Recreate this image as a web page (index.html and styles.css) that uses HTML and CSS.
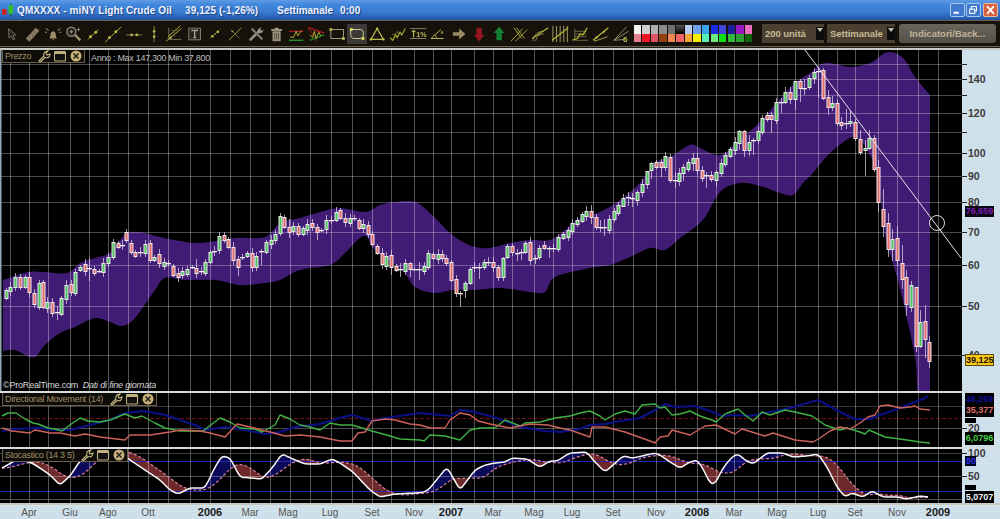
FILE: index.html
```html
<!DOCTYPE html>
<html lang="it">
<head>
<meta charset="utf-8">
<title>ProRealTime</title>
<link rel="stylesheet" href="styles.css">
</head>
<body>
<div class="app">
  <header class="titlebar">
    <svg class="appicon" viewBox="0 0 14 14"><rect x="0" y="6" width="5" height="6" fill="#d02020"/><line x1="9.5" y1="0" x2="9.5" y2="14" stroke="#0a5a10"/><rect x="7" y="2" width="5" height="9" fill="#30c030"/></svg>
    <span class="t-name">QMXXXX - miNY Light Crude Oil</span>
    <span class="t-price">39,125 (-1,26%)</span>
    <span class="t-per">Settimanale</span>
    <span class="t-time">0:00</span>
    <div class="winbtns">
      <span class="winbtn"><svg viewBox="0 0 15 14"><rect x="3" y="9" width="6" height="2.4" fill="#fff"/></svg></span>
      <span class="winbtn"><svg viewBox="0 0 15 14"><rect x="5" y="3" width="6" height="5" fill="none" stroke="#fff" stroke-width="1.2"/><rect x="3" y="6" width="6" height="5" fill="#4a80d0" stroke="#fff" stroke-width="1.2"/></svg></span>
      <span class="winbtn close"><svg viewBox="0 0 15 14"><path d="M3.5 2.5l8 9M11.5 2.5l-8 9" stroke="#fff" stroke-width="2.2"/></svg></span>
    </div>
  </header>

  <nav class="toolbar">
    <div class="tools">
      <svg class="ico" viewBox="0 0 20 20"><path d="M6 4l8 7-3 .5 2 4-2 1-2-4-2.500 2z" fill="#2a2620" stroke="#8f8f88"/></svg>
      <svg class="ico" viewBox="0 0 20 20"><path d="M3 15L14 3l4 3.500L7 18.500z" fill="#a89a80" stroke="#5a4f3c" stroke-width=".6"/><path d="M6 13l2 2M9 10l2 2M12 7l2 2" stroke="#4f4636"/></svg>
      <svg class="ico" viewBox="0 0 20 20"><path d="M6 15c1-2 1-4 1.500-6 .5-2.500 4.500-2.500 5 0 .5 2 .5 4 1.500 6z" fill="#c0ac84"/><rect x="8.500" y="15" width="3" height="2" fill="#6a5a3a"/><path d="M2 4l3 2M18 4l-3 2M1 8h2M19 8h-2" stroke="#d8d0b0"/></svg>
      <svg class="ico" viewBox="0 0 20 20"><circle cx="8" cy="7.500" r="5" fill="#28261f" stroke="#9a9a90" stroke-width="1.600"/><path d="M12 11l6 6" stroke="#c0b08a" stroke-width="2.600"/><path d="M6 7.500h4M8 5.500v4" stroke="#c0c0a8"/><path d="M14 5h4M16 3v4" stroke="#c0c0a8" stroke-width=".8"/></svg>
      <svg class="ico" viewBox="0 0 20 20"><path d="M4 16L16 5" stroke="#c8c840"/><circle cx="7" cy="13" r="1.600" fill="#e8e860"/><circle cx="13" cy="8" r="1.600" fill="#e8e860"/></svg>
      <svg class="ico" viewBox="0 0 20 20"><path d="M1 19L19 2" stroke="#d8d840"/><circle cx="6" cy="14" r="1.600" fill="#e8e860"/><circle cx="13" cy="7.500" r="1.600" fill="#e8e860"/></svg>
      <svg class="ico" viewBox="0 0 20 20"><path d="M1 11h18" stroke="#a09a50"/><circle cx="7" cy="11" r="1.500" fill="#d8d860"/><circle cx="13" cy="11" r="1.500" fill="#d8d860"/></svg>
      <svg class="ico" viewBox="0 0 20 20"><path d="M10 1v18" stroke="#b0b050"/><circle cx="10" cy="7" r="1.500" fill="#d8d860"/><circle cx="10" cy="13" r="1.500" fill="#d8d860"/></svg>
      <svg class="ico" viewBox="0 0 20 20"><path d="M4 3v13h14" fill="none" stroke="#8f8a70"/><path d="M1 18L18 4M3 13L17 1" stroke="#e0d840"/><path d="M6 6h8M6 9h8M6 12h6" stroke="#7f7a60" stroke-width=".7"/><circle cx="6" cy="14" r="1.300" fill="#e8e860"/></svg>
      <svg class="ico" viewBox="0 0 20 20"><rect x="3" y="3.500" width="13" height="13" fill="#2a2820" stroke="#a0a090"/><path d="M6.500 7V6h6v1M9.500 6v8M8 14h3" fill="none" stroke="#d0d0c0" stroke-width="1.400"/></svg>
      <svg class="ico" viewBox="0 0 20 20"><path d="M4 15L16 5" stroke="#a8a830" stroke-dasharray="1.500 1.500"/><circle cx="7" cy="12.500" r="1.500" fill="#e8e860"/><circle cx="13" cy="7.500" r="1.500" fill="#e8e860"/><circle cx="10" cy="10" r=".9" fill="#e8e860"/></svg>
      <svg class="ico" viewBox="0 0 20 20"><path d="M3 17L17 3" stroke="#d0c840"/><path d="M5 5l10 10" stroke="#8f8a60"/><circle cx="7" cy="7" r="1" fill="#c8c060"/></svg>
      <svg class="ico" viewBox="0 0 20 20"><path d="M3 17L13 7" stroke="#b8b0a0" stroke-width="2.800"/><path d="M12 8c-1-3 1-5 4-5l-1.500 2 1.500 1.500 2-1.500c0 3-2 5-5 4z" fill="#b8b0a0"/><path d="M5 4l12 12" stroke="#9a927e" stroke-width="2.400"/></svg>
      <svg class="ico" viewBox="0 0 20 20"><rect x="6" y="7" width="9" height="11" fill="#b8ad98"/><rect x="4.500" y="4.500" width="12" height="2" fill="#c8bea8"/><rect x="8.500" y="3" width="4" height="1.500" fill="#c8bea8"/><path d="M8.500 9v7M10.500 9v7M12.500 9v7" stroke="#5f5848"/></svg>
      <svg class="ico" viewBox="0 0 20 20"><path d="M2 7h16" stroke="#c02020" stroke-width="1.400"/><path d="M2 17h16" stroke="#20b030" stroke-width="1.600"/><path d="M3 13l4 1 3-7 2 5 4-6" fill="none" stroke="#e0e040"/></svg>
      <svg class="ico" viewBox="0 0 20 20"><path d="M1 3l18 6" stroke="#d02020" stroke-width="1.400"/><path d="M1 3l10 15" stroke="#c02020"/><path d="M3 17L19 11" stroke="#20a030" stroke-width="1.600"/><path d="M3 11l3 3 2-7 2 8 3-7 2 4" fill="none" stroke="#e0e040"/></svg>
      <svg class="ico" viewBox="0 0 20 20"><rect x="3" y="5" width="14" height="10" fill="none" stroke="#c8c8a0"/><rect x="1.500" y="3.500" width="3" height="3" fill="#e8e060"/><rect x="15.500" y="13.500" width="3" height="3" fill="#e8e060"/></svg>
      <svg class="ico sel" viewBox="0 0 20 20"><path d="M4 5h10c4 0 4 10 0 10H6C2 15 2 5 4 5z" fill="none" stroke="#d8d8a0"/><rect x="2" y="3.500" width="3" height="3" fill="#e8e060"/><rect x="15" y="13.500" width="3" height="3" fill="#e8e060"/></svg>
      <svg class="ico" viewBox="0 0 20 20"><path d="M10 4L3 16h14z" fill="none" stroke="#e0e060" stroke-width="1.300"/><circle cx="10" cy="4" r="1.300" fill="#e8e860"/><circle cx="3" cy="16" r="1.300" fill="#e8e860"/><circle cx="17" cy="16" r="1.300" fill="#e8e860"/></svg>
      <svg class="ico" viewBox="0 0 20 20"><path d="M1 14l3 3 3-6 2 3 3-6 2 3 4-7" fill="none" stroke="#d8d840" stroke-width="1.200"/><path d="M3 10l3 1 3-4 2 3" fill="none" stroke="#a8a840" stroke-width=".8"/></svg>
      <svg class="ico" viewBox="0 0 20 20"><path d="M1 4h18M1 15h18" stroke="#a8a880"/><path d="M5 14V6M3 8l2-2 2 2" fill="none" stroke="#e0e060" stroke-width="1.200"/><text class="ico-t" x="8" y="13">1%</text></svg>
      <svg class="ico" viewBox="0 0 20 20"><path d="M2 15h14M2 15L13 5" fill="none" stroke="#d8d860" stroke-width="1.100"/><path d="M8 15c0-2-.5-3-1.500-4" fill="none" stroke="#d8d860"/><text class="ico-t" x="13" y="13">º</text></svg>
      <svg class="ico" viewBox="0 0 20 20"><path d="M3 8h7V4l7 6-7 6v-4H3z" fill="#b8a878"/></svg>
      <svg class="ico" viewBox="0 0 20 20"><path d="M7 3h6v8h3l-6 7-6-7h3z" fill="#b01828"/></svg>
      <svg class="ico" viewBox="0 0 20 20"><path d="M7 17h6V9h3l-6-7-6 7h3z" fill="#129a3a"/></svg>
      <svg class="ico" viewBox="0 0 20 20"><path d="M1 18L14 4M6 18L19 5M4 3l9 12M7 3l9 12" stroke="#d8d840"/></svg>
      <svg class="ico" viewBox="0 0 20 20"><path d="M2 18c1-8 6-11 12-11M5 18c1-6 4-8 9-8" fill="none" stroke="#c0b880"/><path d="M1 15L19 3" stroke="#e0e040" stroke-width="1.200"/></svg>
      <svg class="ico" viewBox="0 0 20 20"><path d="M2 1v18M6 1v18M10 1v18M14 1v18M18 1v18" stroke="#c8c880"/><path d="M1 17L19 3" stroke="#e0e040" stroke-width="1.200"/></svg>
      <svg class="ico" viewBox="0 0 20 20"><path d="M4 4v13h15M4 7h13M4 10h13M4 13h13" fill="none" stroke="#a8a468" stroke-width=".8"/><path d="M1 17l6-2 3-5 3 1 5-8" fill="none" stroke="#e0e040" stroke-width="1.300"/></svg>
      <svg class="ico" viewBox="0 0 20 20"><path d="M1 17L18 3" stroke="#e0e040" stroke-width="1.300"/><path d="M2 18l7-2 8-3" fill="none" stroke="#d0d060"/><circle cx="5" cy="14" r="1.200" fill="#e8e860"/><circle cx="13" cy="7.500" r="1.200" fill="#e8e860"/></svg>
      <svg class="ico" viewBox="0 0 20 20"><path d="M2 17L16 2M2 17L18 7M2 17l12-1" stroke="#b8b480"/><text class="ico-six" x="12" y="19">6</text></svg>
    </div>
    <div class="palette">
      <i class="c1"></i><i class="c2"></i><i class="c3"></i><i class="c4"></i><i class="c5"></i><i class="c6"></i><i class="c7"></i><i class="c8"></i><i class="c9"></i><i class="c10"></i><i class="c11"></i><i class="c12"></i><i class="c13"></i><i class="c14"></i>
      <i class="d1"></i><i class="d2"></i><i class="d3"></i><i class="d4"></i><i class="d5"></i><i class="d6"></i><i class="d7"></i><i class="d8"></i><i class="d9"></i><i class="d10"></i><i class="d11"></i><i class="d12"></i><i class="d13"></i><i class="d14"></i>
    </div>
    <div class="combo units"><span>200 unità</span><b class="drop"></b></div>
    <div class="combo period"><span>Settimanale</span><b class="drop"></b></div>
    <div class="indic">Indicatori/Back...</div>
  </nav>
  <div class="strip"></div>

  <section class="panel main-panel">
    <div class="plot">
      <svg id="main" class="chart" width="962" height="341" viewBox="0 50 962 341"></svg>
      <div class="phead"><span class="pname">Prezzo</span>
        <svg class="hico" viewBox="0 0 14 12"><use href="#wrench"/></svg><svg class="hico" viewBox="0 0 14 12"><use href="#winic"/></svg><svg class="hico" viewBox="0 0 14 12"><use href="#closeic"/></svg></div>
      <span class="anno">Anno : Max 147,300 Min 37,800</span>
      <span class="copy">©ProRealTime.com&nbsp; <em>Dati di fine giornata</em></span>
    </div>
    <div class="axis">
      <span class="tick" style="top:7px"></span>
      <span class="tick lab" style="top:22px">140</span>
      <span class="tick" style="top:38px"></span>
      <span class="tick lab" style="top:56px">120</span>
      <span class="tick" style="top:75px"></span>
      <span class="tick lab" style="top:96px">100</span>
      <span class="tick lab" style="top:119px">90</span>
      <span class="tick lab" style="top:145px">80</span>
      <span class="tick lab" style="top:175px">70</span>
      <span class="tick lab" style="top:208px">60</span>
      <span class="tick lab" style="top:249px">50</span>
      <span class="tick lab" style="top:298px">40</span>
      <span class="tag tag-purple" style="top:156px">76,659</span>
      <span class="tag tag-gold" style="top:304px">39,125</span>
    </div>
  </section>

  <section class="panel sub-panel">
    <div class="plot">
      <svg id="dm" class="chart" width="962" height="54" viewBox="0 393 962 54"></svg>
      <div class="phead"><span class="pname">Directional Movement (14)</span>
        <svg class="hico" viewBox="0 0 14 12"><use href="#wrench"/></svg><svg class="hico" viewBox="0 0 14 12"><use href="#winic"/></svg><svg class="hico" viewBox="0 0 14 12"><use href="#closeic"/></svg></div>
    </div>
    <div class="axis">
      <span class="tag tag-navy" style="top:0">46,269</span>
      <span class="tag tag-red" style="top:11px">35,377</span>
      <span class="tag tag-stub" style="top:25px"></span>
      <span class="tick lab" style="top:28px">20</span>
      <span class="tag tag-green" style="top:39px">6,0796</span>
    </div>
  </section>

  <section class="panel sub-panel">
    <div class="plot">
      <svg id="st" class="chart" width="962" height="54" viewBox="0 449 962 54"></svg>
      <div class="phead"><span class="pname">Stocastico (14 3 5)</span>
        <svg class="hico" viewBox="0 0 14 12"><use href="#wrench"/></svg><svg class="hico" viewBox="0 0 14 12"><use href="#winic"/></svg><svg class="hico" viewBox="0 0 14 12"><use href="#closeic"/></svg></div>
    </div>
    <div class="axis">
      <span class="tick lab tight" style="top:0">100</span>
      <span class="tag tag-blue" style="top:7px">80</span>
      <span class="tick lab" style="top:20px">50</span>
      <span class="tag tag-stub" style="top:36px"></span>
      <span class="tag tag-white" style="top:42px">5,0707</span>
    </div>
  </section>

  <footer class="xaxis">
    <span style="left:29px">Apr</span><span style="left:70px">Giu</span><span style="left:108px">Ago</span><span style="left:148px">Ott</span>
    <span class="yr" style="left:210px">2006</span><span style="left:250px">Mar</span><span style="left:288px">Mag</span><span style="left:330px">Lug</span><span style="left:372px">Set</span><span style="left:414px">Nov</span>
    <span class="yr" style="left:451px">2007</span><span style="left:493px">Mar</span><span style="left:534px">Mag</span><span style="left:572px">Lug</span><span style="left:613px">Set</span><span style="left:656px">Nov</span>
    <span class="yr" style="left:697px">2008</span><span style="left:734px">Mar</span><span style="left:777px">Mag</span><span style="left:818px">Lug</span><span style="left:855px">Set</span><span style="left:897px">Nov</span>
    <span class="yr" style="left:938px">2009</span>
  </footer>
</div>

<svg class="defs" width="0" height="0">
  <defs>
    <g id="wrench"><path d="M2 11L7 6c-1-3 1-5 4-5L9 3l1 2 3-1c0 3-2 4.500-5 3.500L3.500 12z" fill="none" stroke="#c8b888" stroke-width="1.100"/></g>
    <g id="winic"><rect x="1.500" y="1.500" width="11" height="9.500" rx="1" fill="#111" stroke="#c0b080" stroke-width="1.100"/><rect x="1.500" y="1.500" width="11" height="2.500" fill="#c0b080"/></g>
    <g id="closeic"><circle cx="7" cy="6" r="5.500" fill="#c8b078"/><path d="M4.500 3.500l5 5M9.500 3.500l-5 5" stroke="#222" stroke-width="1.500"/></g>
  </defs>
</svg>
<script src="script.js"></script>
</body>
</html>
```
FILE: styles.css
```css
* { box-sizing: border-box; }
html, body { margin: 0; padding: 0; background: #000; }
body { width: 1000px; height: 519px; overflow: hidden; font-family: "Liberation Sans", Arial, sans-serif; }
.app { width: 1000px; height: 519px; display: flex; flex-direction: column; background: #cfe0ea; }
.defs { position: absolute; }

.titlebar {
  height: 20px; flex: none; display: flex; align-items: center; padding-left: 2px;
  background: linear-gradient(#5f9be4 0, #3f86dd 25%, #3a7bd0 60%, #1f55a8 100%);
  color: #eef3ff; font: bold 10px "Liberation Sans", sans-serif;
  letter-spacing: .1px; text-shadow: 1px 1px 1px #1b3f80;
}
.appicon { width: 13px; height: 14px; flex: none; margin-right: 2px; }
.t-name { width: 168px; flex: none; white-space: nowrap; }
.t-price { width: 92px; flex: none; white-space: nowrap; }
.t-per { width: 63px; flex: none; white-space: nowrap; letter-spacing: 0; }
.t-time { flex: none; }
.winbtns { margin-left: auto; display: flex; gap: 1px; padding-right: 2px; }
.winbtn { width: 15px; height: 14px; border: 1px solid #a9c6ee; border-radius: 2px; background: #3f78cc; display: block; }
.winbtn svg { width: 100%; height: 100%; display: block; }
.winbtn.close { background: #d8603c; border-color: #e8b8a0; margin-left: 1px; }

.toolbar {
  height: 27px; flex: none; display: flex; align-items: center; padding: 0 2px;
  background: #16110a; border-top: 1px solid #6f5f46; border-bottom: 1px solid #6f5f46;
}
.tools { display: flex; width: 631px; flex: none; }
.ico { width: 20.3px; height: 20px; flex: none; opacity: .82; padding: 1px; }
.ico.sel { background: #3c3a36; opacity: 1; }
.ico-t { font: bold 8px "Liberation Sans", sans-serif; fill: #d8d860; }
.ico-six { font: bold 9px "Liberation Sans", sans-serif; fill: #e0e060; }

.palette { display: grid; grid-template-columns: repeat(14, 8.55px); grid-auto-rows: 8.5px; width: 120px; flex: none; }
.palette i { display: block; margin: 0 .6px; }
.c1{background:#f4f4f4}.c2{background:#cfcfcf}.c3{background:#b0b0b0}.c4{background:#8c8c8c}.c5{background:#707070}.c6{background:linear-gradient(#555,#000)}.c7{background:#b8ccf2}.c8{background:#70a0ee}.c9{background:#38a4ec}.c10{background:#1c2ce0}.c11{background:#4444d8}.c12{background:#1c1c9c}.c13{background:#9a18c4}.c14{background:#f06cc4}
.d1{background:#e88090}.d2{background:#ee1420}.d3{background:#dc5464}.d4{background:#92400e}.d5{background:#f08850}.d6{background:#f06464}.d7{background:#f0a634}.d8{background:#f8f000}.d9{background:#58f0b4}.d10{background:#70e880}.d11{background:#10e010}.d12{background:#30b838}.d13{background:#2ca034}.d14{background:#0c640c}

.combo {
  height: 19px; flex: none; display: flex; align-items: center; padding-left: 3px;
  background: #4a3f30; color: #c8bc98; font: bold 9.5px "Liberation Sans", sans-serif; letter-spacing: -.05px; white-space: nowrap;
}
.combo.units { width: 62px; margin-left: 9px; }
.combo.period { width: 68px; margin-left: 3px; }
.drop { margin-left: auto; width: 8px; height: 13px; background: #0c0c0c; position: relative; }
.drop::after { content: ""; position: absolute; left: 1px; top: 1px; border: 3px solid transparent; border-top: 4px solid #c8c0a8; }
.indic {
  width: 97px; height: 19px; margin-left: 4px; flex: none; text-align: center; border-radius: 3px;
  background: linear-gradient(#6a655a, #55504a); color: #c0b496; font: bold 9.5px/19px "Liberation Sans", sans-serif;
}
.strip { height: 3px; flex: none; background: linear-gradient(#1c1c1a 0 1px, #c8c8c4 1px); }

.panel { display: flex; flex: none; }
.main-panel { height: 341px; }
.sub-panel { height: 56px; border-top: 2px solid #d8dcdc; }
.plot { width: 962px; flex: none; position: relative; background: #000; }
.chart { display: block; filter: blur(.3px); }
.axis { flex: 1; position: relative; overflow: hidden; }
.axis, .xaxis {
  background: repeating-linear-gradient(0deg, #cbdde8 0 1px, #d3e3ec 1px 2px);
}
.tick { position: absolute; left: 0; width: 5px; height: 1px; background: #222; margin-top: 7px; }
.tick.lab { width: auto; height: 14px; margin-top: 0; background: none; padding-left: 6px; font: bold 10.5px/14px "Liberation Sans", sans-serif; color: #3a3a3a; }
.tick.lab::before { content: ""; position: absolute; left: 0; top: 7px; width: 5px; height: 1px; background: #222; }
.tick.lab.tight { height: 8px; line-height: 8px; }
.tick.lab.tight::before { top: 4px; }
.tag { position: absolute; left: 3px; width: 29px; height: 13px; text-align: center; font: bold 9px/13px "Liberation Sans", sans-serif; background: #000; white-space: nowrap; }
.tag-purple { color: #7a20b0; height: 11px; line-height: 11px; background: #0a0612; }
.tag-gold { background: #f8c814; color: #1a1000; border: 1px solid #5a4a10; height: 12px; line-height: 10px; }
.tag-navy { color: #101090; }
.tag-red { color: #e07070; }
.tag-green { color: #48d048; }
.tag-white { color: #f4f4f4; }
.tag-blue { color: #3030e0; background: #050520; width: 11px; text-align: left; padding-left: 1px; height: 10px; line-height: 10px; }
.tag-stub { width: 11px; height: 5px; }

.phead {
  position: absolute; left: 2px; top: 0; height: 13px; display: flex; align-items: center; gap: 2px;
  background: #0d0c08; border: 1px solid #6a604a; border-top: 0; padding: 0 1px 0 2px;
}
.pname { font: 9px/12px "Liberation Sans", sans-serif; color: #a08e66; white-space: nowrap; margin-right: 4px; letter-spacing: -.3px; }
.hico { width: 14px; height: 12px; flex: none; }
.anno { position: absolute; left: 91px; top: 2px; font: 9px/12px "Liberation Sans", sans-serif; color: #bfbfbf; letter-spacing: -.3px; white-space: nowrap; }
.copy { position: absolute; left: 3px; top: 329px; font: 9px/12px "Liberation Sans", sans-serif; color: #d8d8d8; white-space: nowrap; letter-spacing: -.2px; }
.copy em { font-style: italic; }

.xaxis { flex: 1; position: relative; border-top: 2px solid #c8c8c0; }
.xaxis span { position: absolute; top: 1px; transform: translateX(-50%); font: 10px/13px "Liberation Sans", sans-serif; color: #555; }
.xaxis .yr { font: bold 11px/13px "Liberation Sans", sans-serif; color: #1a1a1a; }
```
FILE: script.js
```js
var NS = "http://www.w3.org/2000/svg";
function el(parent, tag, attrs) {
  var e = document.createElementNS(NS, tag);
  for (var k in attrs) e.setAttribute(k, attrs[k]);
  parent.appendChild(e);
  return e;
}
function pts(a) { return a.map(function (p) { return p[0] + "," + p[1]; }).join(" "); }
/* Catmull-Rom curve through the points, as path segments */
function curve(a) {
  var d = "";
  for (var i = 0; i < a.length - 1; i++) {
    var p0 = a[Math.max(i - 1, 0)], p1 = a[i], p2 = a[i + 1], p3 = a[Math.min(i + 2, a.length - 1)];
    d += " C" + (p1[0] + (p2[0] - p0[0]) / 6).toFixed(1) + " " + (p1[1] + (p2[1] - p0[1]) / 6).toFixed(1) + " " +
      (p2[0] - (p3[0] - p1[0]) / 6).toFixed(1) + " " + (p2[1] - (p3[1] - p1[1]) / 6).toFixed(1) + " " + p2[0] + " " + p2[1];
  }
  return d;
}

var gridX = [10,29,48,70,89,108,128,148,168,190,210,230,250,270,290,310,331,352,372,391,414,433,451,474,493,512,534,553,572,593,613,633,656,675,697,716,734,758,777,795,818,837,855,878,897,918,938];

function vgrid(svg, top, bottom) {
  gridX.forEach(function (x) {
    el(svg, "line", { x1: x + .5, x2: x + .5, y1: top, y2: bottom, stroke: "#fff", "stroke-opacity": .33 });
  });
}
function hline(svg, y, color, extra) {
  var a = { x1: 0, x2: 962, y1: y + .5, y2: y + .5, stroke: color };
  for (var k in extra || {}) a[k] = extra[k];
  el(svg, "line", a);
}

/* ---------- price panel ---------- */
var upper = [[3,280],[28,272],[43,272],[67,273],[80,263],[95,258],[110,253],[120,240],[127,233],[140,232],[160,237],[180,241],[200,243],[235,238],[265,237],[280,223],[300,218],[320,212],[340,208],[365,212],[380,205],[395,202],[415,202],[430,213],[450,233],[465,243],[475,247],[490,248],[510,243],[530,240],[550,240],[565,230],[580,218],[600,212],[620,200],[640,183],[655,163],[670,157],[690,145],[700,148],[720,155],[740,140],[760,122],[775,105],[795,83],[810,73],[825,63],[850,67],[870,63],[885,53],[895,53],[905,60],[915,77],[930,95]];
var lower = [[3,351],[15,350],[25,355],[35,357],[45,345],[60,333],[75,327],[95,318],[110,322],[122,326],[135,318],[155,290],[165,278],[185,280],[215,280],[240,285],[265,283],[280,280],[300,270],[330,265],[345,253],[360,238],[367,237],[375,250],[402,270],[415,287],[435,293],[452,290],[475,290],[500,288],[530,292],[545,292],[555,277],[590,268],[610,265],[630,257],[650,248],[665,250],[680,238],[703,220],[720,192],[740,183],[760,186],[780,193],[793,195],[803,183],[813,173],[830,153],[850,138],[860,140],[867,150],[877,173],[885,235],[893,263],[902,297],[915,357],[917,391]];

var C = [
[6,290,298,"g"],[10,287,291,"g"],[15,277,287,"g"],[20,277,287,"r"],[25,277,287,"g"],[29,277,292,"r"],[34,293,304,"r"],[39,283,307,"g"],[43,282,307,"r"],[47,302,308,"g"],[52,302,313,"r"],[57,312,312,"d",306,320],[61,298,314,"g"],[66,285,299,"g"],[71,284,292,"r"],[75,272,293,"g"],[80,267,270,"g"],[85,264,271,"r"],[89,268,268,"d",258,281],[94,269,273,"r"],[99,271,271,"d"],[103,263,272,"g"],[108,257,263,"g"],[113,242,257,"g"],[118,243,247,"r"],[122,245,245,"d"],[126,232,240,"r",229,243],[131,243,252,"r"],[135,252,256,"r"],[140,252,252,"d"],[145,244,253,"g"],[150,243,260,"r"],[154,257,260,"g"],[159,254,263,"r"],[164,262,266,"g"],[168,263,263,"d"],[173,266,275,"r"],[178,273,277,"r"],[182,271,275,"g"],[187,269,274,"g"],[192,267,267,"d"],[196,268,273,"r",259,278],[201,271,271,"d"],[205,262,273,"g"],[210,252,262,"g"],[214,251,251,"d"],[219,236,250,"g"],[224,235,240,"r"],[228,239,247,"r"],[233,247,260,"r"],
[238,259,267,"r",256,276],[242,257,257,"d"],[247,253,256,"g"],[252,253,267,"r"],[256,256,267,"g"],[261,251,251,"d",249,265],[266,242,252,"g"],[271,240,244,"g"],[275,234,240,"g"],[280,216,233,"g"],[284,217,227,"r"],[289,227,232,"r",219,238],[293,226,231,"g"],[298,226,234,"r"],[303,228,234,"g"],[307,224,230,"g"],[312,223,227,"r"],[317,227,232,"r",224,240],[321,230,230,"d"],[326,220,229,"g"],[331,220,220,"d"],[336,212,220,"g",207,222],[340,210,218,"r"],[345,218,222,"r"],[350,218,223,"g"],[354,218,218,"d"],[359,220,228,"r"],[363,224,228,"g"],[368,225,234,"r"],[372,234,244,"r"],[377,246,253,"r"],[382,253,264,"r"],[386,256,266,"g"],[391,255,267,"r",250,275],[396,266,270,"r"],[400,269,269,"d",263,277],[405,263,271,"g"],[410,263,269,"r",262,277],[414,269,269,"d"],[419,269,269,"d",262,280],[424,266,271,"g"],[428,253,267,"g"],[433,254,258,"r"],[438,254,259,"g"],[442,254,258,"r"],[446,258,263,"r"],[451,262,280,"r"],[456,279,293,"r",275,297],[460,293,293,"d",291,307],[465,283,290,"g",281,298],[470,269,283,"g"],
[474,267,267,"d"],[479,267,267,"d",263,279],[484,262,267,"g"],[488,262,262,"d",257,266],[493,262,267,"r"],[498,267,277,"r",265,281],[503,258,277,"g",257,281],[507,246,257,"g"],[512,246,252,"r",244,256],[517,253,253,"d",249,261],[521,252,252,"d",249,260],[525,243,252,"g"],[530,242,260,"r"],[535,258,258,"d",255,264],[539,248,257,"g"],[544,245,248,"r",241,250],[549,248,248,"d",246,258],[553,248,248,"d"],[558,237,249,"g"],[563,234,238,"g"],[568,230,237,"g",227,241],[572,223,231,"g"],[577,220,224,"g"],[582,214,221,"g"],[586,211,216,"g"],[591,211,217,"r",205,224],[596,217,227,"r"],[600,227,227,"d",220,232],[604,227,227,"d",219,236],[609,219,230,"g"],[614,211,219,"g"],[618,205,213,"g",202,216],[623,198,206,"g",194,207],[628,197,197,"d",192,206],[632,198,198,"d",193,207],[637,192,200,"g",190,206],[642,184,192,"g"],[647,171,184,"g",171,189],[651,163,170,"g",162,179],[656,162,167,"r"],[661,162,167,"r",159,177],[665,156,167,"g"],[670,157,180,"r"],[675,180,180,"d",172,188],[679,173,181,"g"],[683,167,173,"g",164,181],[688,162,169,"g"],[693,158,163,"g",153,171],[697,158,170,"r"],
[702,170,178,"r"],[706,175,175,"d",172,188],[711,175,179,"r",171,182],[716,172,180,"g",170,187],[721,163,173,"g"],[725,155,164,"g"],[730,149,156,"g"],[735,142,150,"g"],[739,131,143,"g",130,150],[744,131,150,"r",130,157],[749,142,150,"g",135,156],[753,140,140,"d",138,155],[758,131,140,"g"],[762,118,132,"g"],[767,115,119,"r",112,122],[771,115,119,"r",112,133],[776,102,120,"g"],[781,102,102,"d",98,113],[785,92,102,"g",87,104],[790,92,99,"r"],[795,81,99,"g",81,110],[800,81,88,"r",79,102],[804,88,88,"d",79,95],[809,78,87,"g",75,90],[814,72,78,"g",68,84],[818,71,71,"d",67,98],
[823,70,98,"r"],[828,97,107,"r",90,115],[832,103,107,"g",96,111],[837,103,123,"r"],[841,122,125,"r",117,130],[846,123,123,"d",109,129],[850,121,123,"g",110,127],[855,122,138,"r"],[860,139,152,"r",130,155],[865,148,150,"g",140,176],[869,138,148,"g",130,150],[874,138,169,"r"],
[878,167,202,"r",160,212],[883,209,226,"r",189,237],[888,223,249,"r",213,257],[892,239,249,"g",229,261],[897,238,260,"r",226,266],[902,263,279,"r",245,289],[906,277,304,"r",270,316],[911,285,307,"g",281,312],[916,287,346,"r",287,352],[920,322,346,"g",310,348],[925,321,339,"r",305,358],[929,342,361,"r",336,368]
];

(function () {
  var s = document.getElementById("main");
  var d = "M" + upper[0].join(" ") + curve(upper) + " L930 391 L917 391" + curve(lower.slice().reverse()) + " Z";
  el(s, "path", { d: d, fill: "#401c74" });
  [64,79,95,113,132,153,176,202,232,265,306,355].forEach(function (y) {
    hline(s, y, "#fff", { "stroke-opacity": .29 });
  });
  vgrid(s, 50, 391);
  el(s, "rect", { x: 0, y: 50, width: 1.5, height: 341, fill: "#93a6b2" });
  C.forEach(function (c, i) {
    var x = c[0], t = c[1], b = c[2], k = c[3];
    var wt = c[4] !== undefined ? c[4] : t - (2 + i * 7 % 4);
    var wb = c[5] !== undefined ? c[5] : b + (2 + i * 11 % 4);
    el(s, "line", { x1: x + .5, x2: x + .5, y1: wt, y2: wb, stroke: "#e6dcec", "stroke-opacity": .7 });
    if (k === "d") {
      el(s, "rect", { x: x - 2, y: t, width: 5, height: 1.3, fill: "#f4f0f4" });
    } else {
      el(s, "rect", { x: x - 1, y: t + .5, width: 3, height: Math.max(b - t, 2), fill: k === "g" ? "#4cc45c" : "#e46c6c", stroke: "#f0e8ec", "stroke-width": 1 });
    }
  });
  el(s, "line", { x1: 805, y1: 50, x2: 961, y2: 258, stroke: "#e8e4ec", "stroke-width": 1 });
  el(s, "circle", { cx: 937, cy: 223, r: 7.5, fill: "none", stroke: "#e0dcd8" });
})();

/* ---------- directional movement ---------- */
var green = [[2,416],[8,413],[16,413],[25,419],[33,423],[38,424],[48,428],[55,429],[62,431],[70,425],[80,418],[88,421],[100,422],[110,420],[125,414],[135,418],[142,416],[155,423],[165,428],[180,431],[195,431],[203,431],[212,424],[220,418],[230,422],[240,428],[255,429],[262,432],[275,425],[280,415],[290,419],[300,425],[310,427],[320,430],[330,423],[340,425],[352,425],[372,431],[390,436],[400,439],[420,440],[424,441],[430,435],[445,436],[460,440],[470,430],[480,428],[495,428],[505,420],[520,426],[525,423],[540,422],[555,418],[570,416],[580,413],[590,411],[600,416],[605,420],[615,414],[625,411],[635,414],[642,405],[655,404],[660,408],[665,407],[672,415],[680,414],[690,411],[700,416],[712,420],[716,422],[725,414],[738,409],[745,415],[753,421],[762,412],[770,415],[785,410],[795,412],[812,416],[825,425],[840,430],[847,428],[860,432],[865,434],[869,430],[885,437],[900,439],[920,442],[930,443]];
var red = [[2,428],[12,431],[30,433],[35,430],[50,433],[60,433],[75,436],[85,434],[100,437],[125,440],[130,435],[150,435],[170,432],[180,430],[200,431],[210,433],[225,437],[237,424],[250,427],[270,432],[285,436],[300,435],[320,437],[340,441],[352,441],[358,433],[365,432],[372,421],[385,419],[395,420],[410,424],[420,425],[430,428],[445,428],[450,420],[460,413],[470,415],[478,421],[490,424],[500,426],[510,428],[520,426],[530,424],[548,425],[560,428],[570,430],[590,437],[592,427],[605,427],[625,432],[650,441],[655,443],[660,437],[668,436],[672,430],[690,435],[705,426],[716,425],[735,434],[742,429],[765,436],[773,433],[795,440],[813,442],[820,438],[830,431],[840,427],[850,429],[860,423],[868,417],[875,415],[880,406],[888,405],[900,408],[910,407],[915,406],[920,409],[930,410]];
var blue = [[2,431],[15,429],[40,428],[55,430],[70,430],[90,425],[110,420],[125,413],[145,411],[165,415],[180,420],[200,427],[205,430],[225,427],[245,430],[265,434],[280,432],[295,427],[320,424],[340,418],[352,415],[372,421],[385,418],[420,413],[430,414],[450,416],[460,410],[470,411],[490,416],[505,421],[520,427],[545,431],[560,432],[580,429],[590,425],[605,424],[620,421],[640,418],[655,410],[665,404],[675,407],[695,406],[710,411],[722,416],[735,415],[750,416],[770,412],[790,408],[818,400],[840,412],[855,419],[870,419],[880,415],[900,408],[925,398],[928,396]];

(function () {
  var s = document.getElementById("dm");
  hline(s, 406, "#fff", { "stroke-opacity": .22 });
  hline(s, 428, "#fff", { "stroke-opacity": .3 });
  hline(s, 418, "#6a1010", { "stroke-dasharray": "4 2" });
  vgrid(s, 393, 447);
  [[blue, "#0a1088", 2], [green, "#3fb044", 1.4], [red, "#cc625c", 1.4]].forEach(function (l) {
    el(s, "polyline", { points: pts(l[0]), fill: "none", stroke: l[1], "stroke-width": l[2], "stroke-linejoin": "round" });
  });
})();

/* ---------- stochastic ---------- */
var K = [[2,468],[18,459],[32,463],[40,468],[50,475],[60,485],[70,476],[80,461],[88,456],[100,450],[118,450],[130,460],[145,470],[160,480],[170,490],[178,494],[190,488],[205,488],[215,467],[222,456],[230,458],[240,477],[250,478],[262,479],[272,468],[282,454],[295,460],[305,464],[320,464],[332,459],[340,463],[353,472],[370,490],[380,497],[395,494],[415,493],[425,492],[430,488],[447,467],[460,490],[475,470],[485,465],[495,463],[505,462],[512,458],[527,459],[540,467],[550,461],[557,461],[570,453],[587,452],[593,460],[605,472],[613,465],[623,456],[633,458],[655,453],[660,455],[670,462],[680,468],[690,462],[697,460],[702,467],[710,483],[715,484],[723,468],[732,457],[738,454],[745,460],[753,464],[767,453],[783,453],[793,457],[807,456],[818,454],[827,467],[837,487],[845,497],[852,493],[863,497],[872,491],[883,497],[897,497],[907,499],[920,496],[929,497]];

function interp(a, x) {
  for (var i = 1; i < a.length; i++) {
    if (x <= a[i][0]) {
      var p = a[i - 1], q = a[i];
      return p[1] + (q[1] - p[1]) * (x - p[0]) / (q[0] - p[0]);
    }
  }
  return a[a.length - 1][1];
}

(function () {
  var s = document.getElementById("st");
  var k = [], d = [], x, i, sum;
  for (x = 2; x <= 929; x += 2) {
    k.push([x, (interp(K, x - 2) + interp(K, x) + interp(K, x + 2)) / 3]);
    sum = 0;
    for (i = 0; i < 9; i++) sum += interp(K, Math.max(2, x - i * 3.5));
    d.push([x, sum / 9]);
  }
  for (i = 1; i < k.length; i++) {
    var below = k[i][1] > d[i][1];
    if (Math.abs(k[i][1] - d[i][1]) < .5) continue;
    el(s, "polygon", {
      points: pts([k[i - 1], k[i], d[i], d[i - 1]]),
      fill: below ? "#6e2a2a" : "#0a0a58"
    });
  }
  hline(s, 453, "#fff", { "stroke-opacity": .22 });
  hline(s, 476, "#fff", { "stroke-opacity": .3 });
  hline(s, 499, "#fff", { "stroke-opacity": .3 });
  hline(s, 461, "#2424b4");
  hline(s, 491, "#2424b4");
  vgrid(s, 449, 503);
  el(s, "polyline", { points: pts(d), fill: "none", stroke: "#d880a0", "stroke-width": 1.2, "stroke-dasharray": "3 2" });
  el(s, "polyline", { points: pts(k), fill: "none", stroke: "#f8f8f8", "stroke-width": 1.5, "stroke-linejoin": "round" });
})();
```
